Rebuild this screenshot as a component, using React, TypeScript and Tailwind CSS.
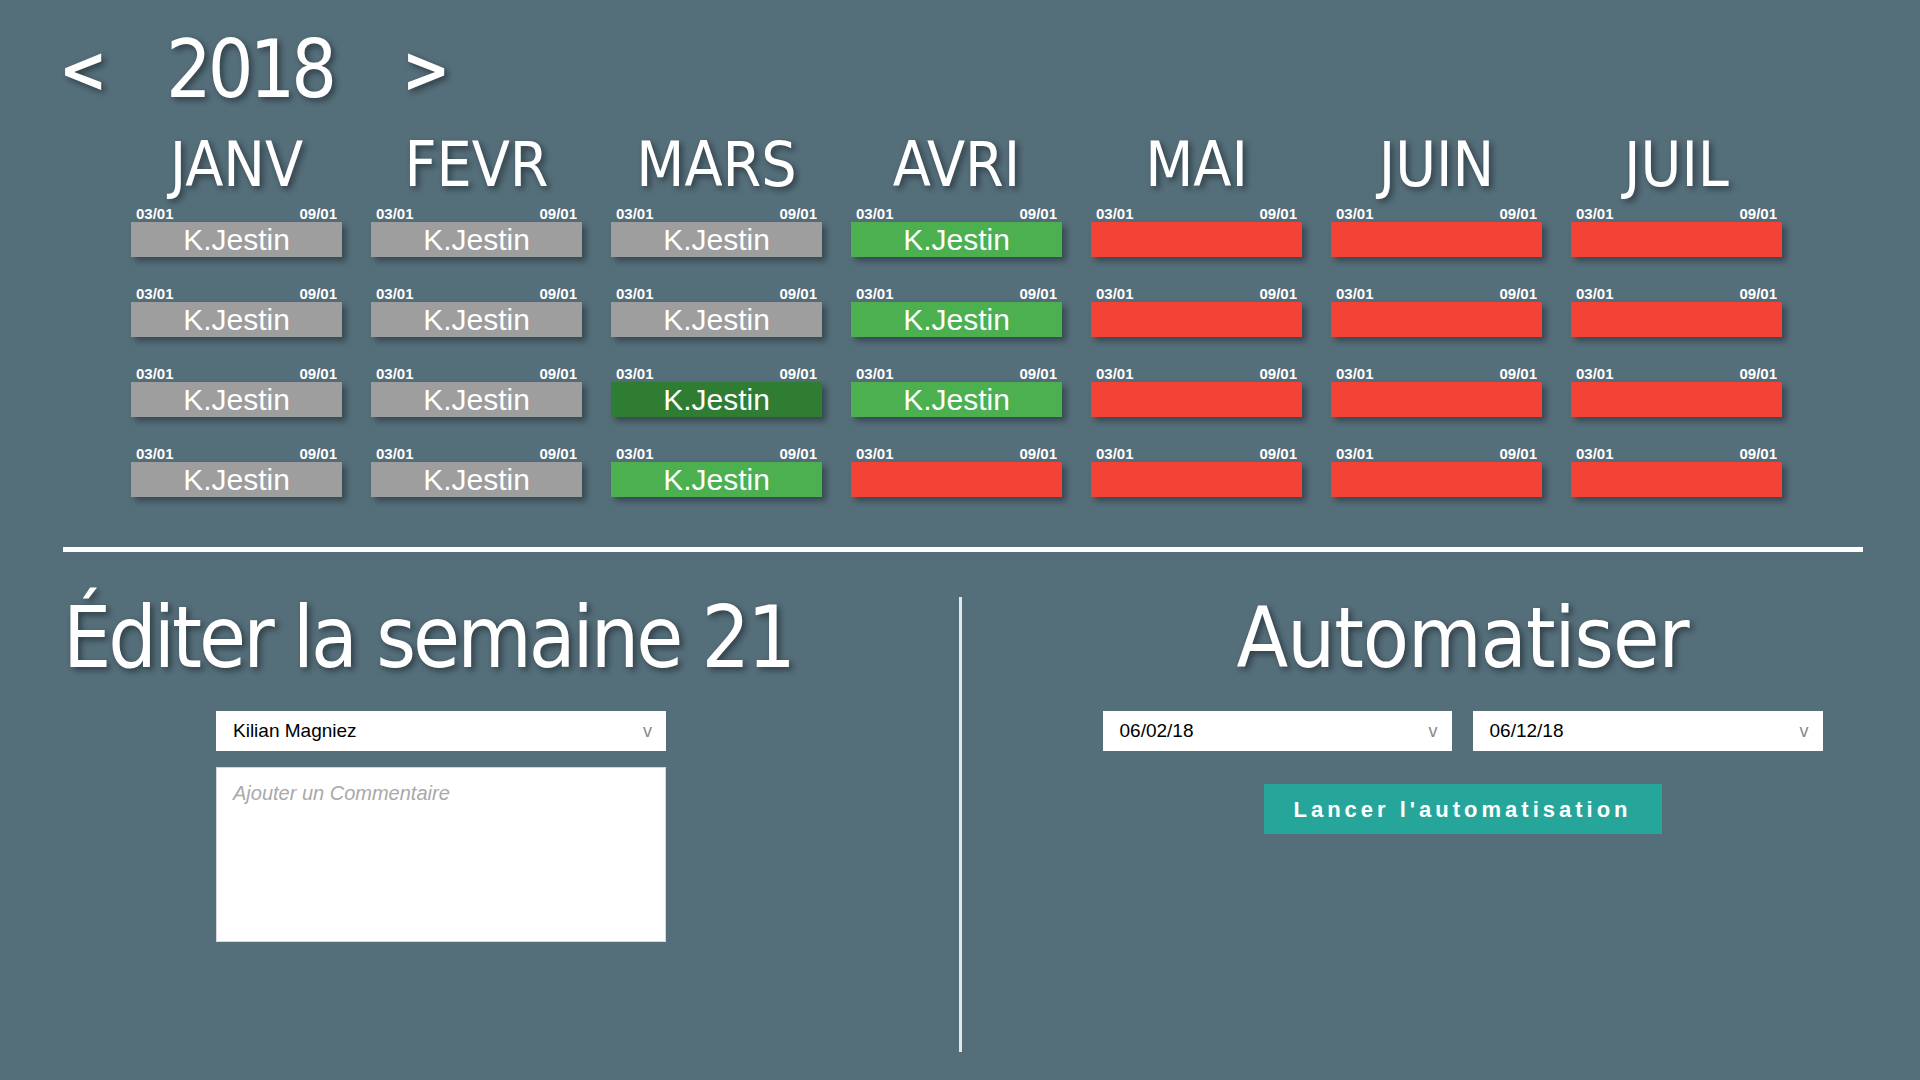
import React from "react";

const months = ["JANV", "FEVR", "MARS", "AVRI", "MAI", "JUIN", "JUIL"];

// g = gris, v = vert, f = vert foncé, r = rouge
const rows = [
  ["g", "g", "g", "v", "r", "r", "r"],
  ["g", "g", "g", "v", "r", "r", "r"],
  ["g", "g", "f", "v", "r", "r", "r"],
  ["g", "g", "v", "r", "r", "r", "r"],
];

const cellColor: Record<string, string> = {
  g: "bg-[#9e9e9e]",
  v: "bg-[#4caf50]",
  f: "bg-[#2e7d32]",
  r: "bg-[#f44336]",
};

const narrow =
  "font-['DejaVu_Sans_Condensed','Liberation_Sans_Narrow','Liberation_Sans',sans-serif]";
const shadowText = "[text-shadow:3px_3px_6px_rgba(0,0,0,0.45)]";

const WeekCell = ({ kind }: { kind: string }) => (
  <div className="flex flex-col">
    <div className="flex justify-between px-[5px] h-[17px] text-[15px] leading-[17px] font-bold text-white font-['Liberation_Sans',sans-serif]">
      <span>03/01</span>
      <span>09/01</span>
    </div>
    <div
      className={`h-[35px] ${cellColor[kind]} shadow-[4px_4px_6px_rgba(0,0,0,0.35)] text-center text-white text-[30px] leading-[35px] font-['Liberation_Sans',sans-serif]`}
    >
      {kind !== "r" ? "K.Jestin" : ""}
    </div>
  </div>
);

const Select = ({ value, className }: { value: string; className: string }) => (
  <div
    className={`flex items-center justify-between bg-white h-[40px] pl-[17px] pr-[14px] ${className}`}
  >
    <span className="text-[19px] text-black font-['Liberation_Sans',sans-serif]">
      {value}
    </span>
    <span className="text-[18px] text-[#8a8a8a] font-['Liberation_Sans',sans-serif]">
      v
    </span>
  </div>
);

export default function App() {
  return (
    <div className="w-[1920px] h-[1080px] bg-[#546e7a] overflow-hidden text-white">
      {/* année */}
      <div className="flex items-center pt-[26px] pl-[59px] h-[114px]">
        <div className={`flex items-center h-[88px] leading-[88px] ${narrow} ${shadowText}`}>
          <span className="w-[107px] text-[64px] font-bold">&lt;</span>
          <span className="w-[236px] text-[80px] tracking-[-4px]">2018</span>
          <span className="text-[64px] font-bold">&gt;</span>
        </div>
      </div>

      {/* planning */}
      <div className="pl-[131px] mt-[19px]">
        <div className="grid grid-cols-[repeat(7,211px)] gap-x-[29px]">
          {months.map((m) => (
            <div
              key={m}
              className={`text-center h-[64px] text-[62px] leading-[64px] ${narrow} ${shadowText}`}
            >
              {m}
            </div>
          ))}
        </div>
        <div className="grid grid-cols-[repeat(7,211px)] gap-x-[29px] gap-y-[28px] mt-[8px]">
          {rows.map((row, i) =>
            row.map((kind, j) => <WeekCell key={`${i}-${j}`} kind={kind} />)
          )}
        </div>
      </div>

      <div className="mt-[50px] ml-[63px] w-[1800px] h-[5px] bg-white" />

      {/* bas de page */}
      <div className="flex">
        <div className="w-[959px] shrink-0 pl-[63px] pt-[38px]">
          <h1
            className={`h-[96px] text-[85px] leading-[96px] tracking-[-3px] whitespace-nowrap ${narrow} ${shadowText}`}
          >
            Éditer la semaine 21
          </h1>
          <div className="ml-[153px] mt-[25px] w-[450px]">
            <Select value="Kilian Magniez" className="w-full" />
            <div className="mt-[16px] h-[175px] bg-white border border-[#d5d9dc] px-[16px] pt-[10px]">
              <span className="text-[20px] italic text-[#a9a9a9] font-['Liberation_Sans',sans-serif]">
                Ajouter un Commentaire
              </span>
            </div>
          </div>
        </div>

        <div className="mt-[45px] w-[3px] h-[455px] shrink-0 bg-[#e3e8ea]" />

        <div className="w-[901px] shrink-0 pl-[100px] pt-[38px] flex flex-col items-center">
          <h1
            className={`h-[96px] text-[84px] leading-[96px] tracking-[-1px] whitespace-nowrap ${narrow} ${shadowText}`}
          >
            Automatiser
          </h1>
          <div className="flex gap-[21px] mt-[25px]">
            <Select value="06/02/18" className="w-[349px]" />
            <Select value="06/12/18" className="w-[350px]" />
          </div>
          <button className="mt-[33px] w-[398px] h-[50px] bg-[#26a69a] text-white text-[22px] font-bold tracking-[4px] font-['Liberation_Sans',sans-serif]">
            Lancer l'automatisation
          </button>
        </div>
      </div>
    </div>
  );
}
